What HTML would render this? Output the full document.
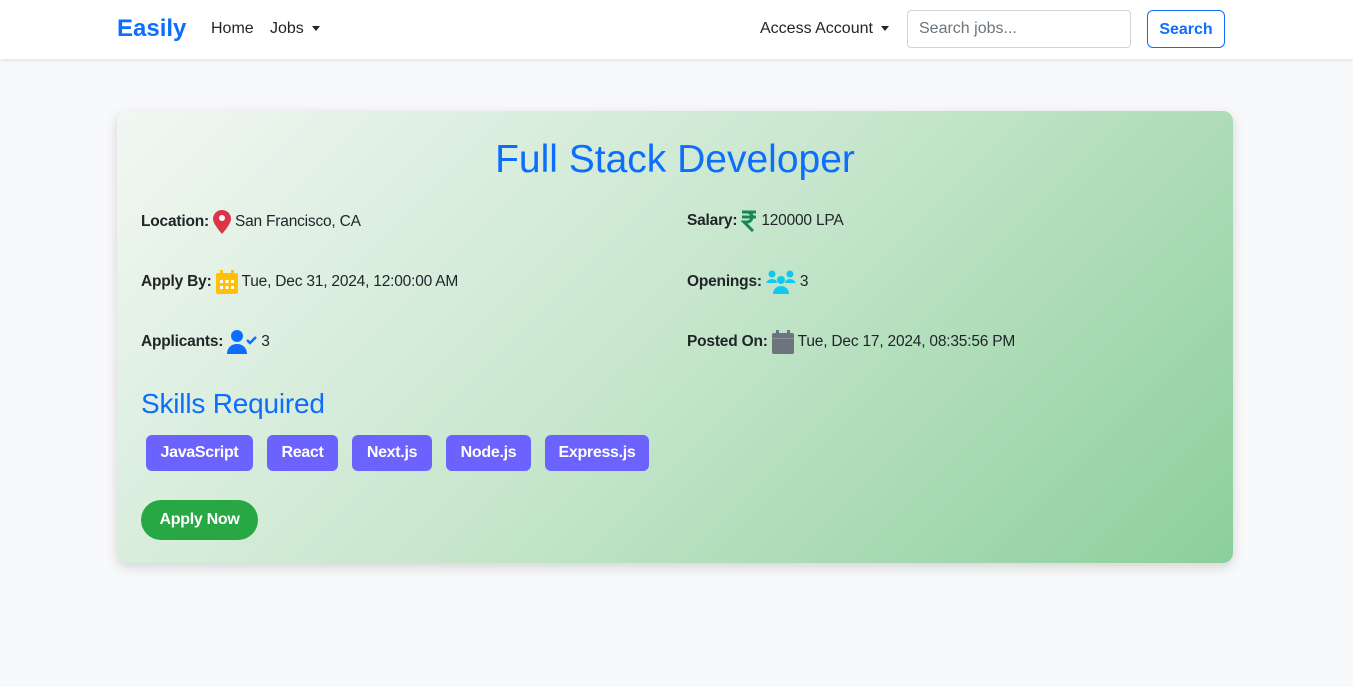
<!DOCTYPE html>
<html><head><meta charset="utf-8"><style>
*{box-sizing:border-box;margin:0;padding:0}
body{width:1353px;height:687px;background:#f8f9fa;font-family:"Liberation Sans",sans-serif;color:#212529;position:relative;overflow:hidden}
.nav{position:absolute;left:0;top:0;width:1353px;height:59px;background:#fff;box-shadow:0 1px 4px rgba(0,0,0,.12)}
.a{position:absolute;white-space:nowrap}
.caret{display:inline-block;width:0;height:0;border-left:4px solid transparent;border-right:4px solid transparent;border-top:5px solid #212529;vertical-align:middle;margin-left:8px}
.card{position:absolute;left:117px;top:111px;width:1116px;height:452px;border-radius:10px;background:linear-gradient(135deg,#f2f7f3 0%,#c6e6cc 50%,#8ccf9b 100%);box-shadow:0 4px 12px rgba(0,0,0,.15)}
.row{position:absolute;font-size:15.5px;letter-spacing:-0.2px;white-space:nowrap;display:flex;align-items:center}
.row b{margin-right:4px}
.row svg{margin-right:4px}
.tag{position:absolute;top:435px;height:36px;background:#6c63ff;color:#fff;border-radius:6px;font-weight:bold;font-size:16px;line-height:36px;text-align:center;letter-spacing:-0.3px}
</style></head><body>
<div class="nav">
<div class="a" style="left:117px;top:15px;font-size:24px;font-weight:bold;color:#0d6efd">Easily</div>
<div class="a" style="left:211px;top:20px;font-size:16px">Home</div>
<div class="a" style="left:270px;top:20px;font-size:16px">Jobs<span class="caret"></span></div>
<div class="a" style="left:760px;top:20px;font-size:16px">Access Account<span class="caret"></span></div>
<div class="a" style="left:907px;top:10px;width:224px;height:38px;border:1px solid #ced4da;border-radius:4px;font-size:16px;color:#6c757d;padding:9px 11px">Search jobs...</div>
<div class="a" style="left:1147px;top:10px;width:78px;height:38px;border:1px solid #0d6efd;border-radius:6px;font-size:16px;font-weight:bold;color:#0d6efd;text-align:center;line-height:37px">Search</div>
</div>
<div class="card"></div>
<div class="a" style="left:117px;width:1116px;top:138px;text-align:center;font-size:39px;color:#0d6efd">Full Stack Developer</div>

<div class="row" style="left:141px;top:210px"><b>Location:</b>
<svg width="18" height="24" viewBox="0 0 18 24"><path d="M9 0C4 0 0 4 0 9c0 5 9 15 9 15s9-10 9-15C18 4 14 0 9 0z" fill="#dc3545"/><circle cx="9" cy="8" r="3" fill="#fff"/></svg>San Francisco, CA</div>
<div class="row" style="left:141px;top:270px"><b>Apply By:</b>
<svg width="22" height="24" viewBox="0 0 22 24"><rect x="0" y="3" width="22" height="21" rx="2" fill="#ffc107"/><rect x="4" y="0" width="3" height="5" fill="#ffc107"/><rect x="15" y="0" width="3" height="5" fill="#ffc107"/><g fill="#fff"><rect x="4" y="10" width="3" height="3"/><rect x="9.5" y="10" width="3" height="3"/><rect x="15" y="10" width="3" height="3"/><rect x="4" y="16" width="3" height="3"/><rect x="9.5" y="16" width="3" height="3"/><rect x="15" y="16" width="3" height="3"/></g></svg>Tue, Dec 31, 2024, 12:00:00 AM</div>
<div class="row" style="left:141px;top:330px"><b>Applicants:</b>
<svg width="30" height="24" viewBox="0 0 30 24"><circle cx="10" cy="6" r="6" fill="#0d6efd"/><path d="M0 24c0-6 4-10 10-10s10 4 10 10z" fill="#0d6efd"/><path d="M20 10l3 3 6-6" stroke="#0d6efd" stroke-width="2.5" fill="none"/></svg>3</div>

<div class="row" style="left:687px;top:210px"><b>Salary:</b>
<svg width="16" height="22" viewBox="0 0 16 22"><path d="M1 2h14M1 7h14M3 2h3a5 5 0 010 10H3l9 9" stroke="#198754" stroke-width="3" fill="none"/></svg>120000 LPA</div>
<div class="row" style="left:687px;top:270px"><b>Openings:</b>
<svg width="30" height="24" viewBox="0 0 30 24"><g fill="#0dcaf0"><circle cx="6" cy="4" r="3.5"/><circle cx="24" cy="4" r="3.5"/><circle cx="15" cy="10" r="4"/><path d="M0 15c0-4 3-6 6-6s5 2 5 4H0z"/><path d="M30 15c0-4-3-6-6-6s-5 2-5 4h11z"/><path d="M7 24c0-5 4-8 8-8s8 3 8 8z"/></g></svg>3</div>
<div class="row" style="left:687px;top:330px"><b>Posted On:</b>
<svg width="22" height="24" viewBox="0 0 22 24"><rect x="0" y="3" width="22" height="21" rx="2" fill="#6c757d"/><rect x="4" y="0" width="3" height="5" fill="#6c757d"/><rect x="15" y="0" width="3" height="5" fill="#6c757d"/><rect x="0" y="8" width="22" height="1" fill="#8a9299"/></svg>Tue, Dec 17, 2024, 08:35:56 PM</div>

<div class="a" style="left:141px;top:388px;font-size:28px;color:#0d6efd;letter-spacing:-0.2px">Skills Required</div>
<div class="tag" style="left:146px;width:107px">JavaScript</div>
<div class="tag" style="left:267px;width:71px">React</div>
<div class="tag" style="left:352px;width:80px">Next.js</div>
<div class="tag" style="left:446px;width:85px">Node.js</div>
<div class="tag" style="left:545px;width:104px">Express.js</div>
<div class="a" style="left:141px;top:500px;width:117px;height:40px;border-radius:20px;background:#28a745;color:#fff;font-weight:bold;font-size:16px;line-height:40px;text-align:center;letter-spacing:-0.3px">Apply Now</div>
</body></html>
